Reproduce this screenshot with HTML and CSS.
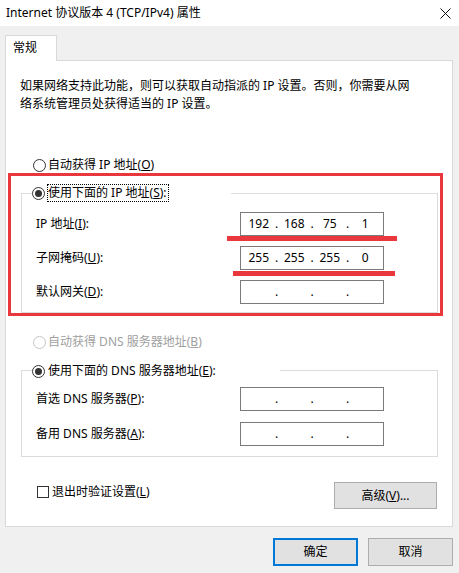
FILE: index.html
```html
<!DOCTYPE html>
<html lang="zh-CN">
<head>
<meta charset="utf-8">
<link rel="stylesheet" href="styles.css">
<title>Internet 协议版本 4 (TCP/IPv4) 属性</title>
</head>
<body>
<div id="dialog">
<div id="titlebar">
<span class="title">Internet 协议版本 4 (TCP/IPv4) 属性</span>
<span class="close"><svg width="11" height="11" viewBox="0 0 11 11"><path d="M0.5 0.5L10.5 10.5M10.5 0.5L0.5 10.5" stroke="#111" stroke-width="1"/></svg></span>
</div>
<div id="tabs"><div class="tab">常规</div></div>
<div id="panel">
<p class="intro">如果网络支持此功能，则可以获取自动指派的 IP 设置。否则，你需要从网<br>络系统管理员处获得适当的 IP 设置。</p>
<div class="opt"><span class="radio"></span>自动获得 IP 地址(<u>O</u>)</div>
<div class="mark">
<div class="group ip">
<div class="legend"><span class="radio on"></span><span class="focus">使用下面的 IP 地址(<u>S</u>):</span></div>
<div class="rows">
  <div class="label">IP 地址(<u>I</u>):</div>
  <div class="ipbox line-a"><span class="oct">192</span><span class="dot">.</span><span class="oct">168</span><span class="dot">.</span><span class="oct">75</span><span class="dot">.</span><span class="oct">1</span></div>
  <div class="label">子网掩码(<u>U</u>):</div>
  <div class="ipbox line-b"><span class="oct">255</span><span class="dot">.</span><span class="oct">255</span><span class="dot">.</span><span class="oct">255</span><span class="dot">.</span><span class="oct">0</span></div>
  <div class="label">默认网关(<u>D</u>):</div>
  <div class="ipbox"><span class="oct"></span><span class="dot">.</span><span class="oct"></span><span class="dot">.</span><span class="oct"></span><span class="dot">.</span><span class="oct"></span></div>
</div>
</div>
</div>
<div class="opt disabled"><span class="radio"></span>自动获得 DNS 服务器地址(<u>B</u>)</div>
<div class="group dns">
<div class="legend"><span class="radio on"></span><span class="text">使用下面的 DNS 服务器地址(<u>E</u>):</span></div>
<div class="rows">
  <div class="label">首选 DNS 服务器(<u>P</u>):</div>
  <div class="ipbox"><span class="oct"></span><span class="dot">.</span><span class="oct"></span><span class="dot">.</span><span class="oct"></span><span class="dot">.</span><span class="oct"></span></div>
  <div class="label">备用 DNS 服务器(<u>A</u>):</div>
  <div class="ipbox"><span class="oct"></span><span class="dot">.</span><span class="oct"></span><span class="dot">.</span><span class="oct"></span><span class="dot">.</span><span class="oct"></span></div>
</div>
</div>
<div class="footer">
  <div class="check"><span class="box"></span>退出时验证设置(<u>L</u>)</div>
  <button class="btn adv">高级(<u>V</u>)...</button>
</div>
</div>
<div id="actions">
  <button class="btn ok">确定</button>
  <button class="btn">取消</button>
</div>
</div>
</body>
</html>
```

FILE: styles.css
```css
body {
  margin: 0;
  background: #f0f0f0;
  font-family: "Noto Sans", "Noto Sans CJK SC", sans-serif;
  font-size: 12px;
  line-height: 18px;
  color: #000;
}
u { text-underline-offset: 1px; }
#dialog { width: 459px; height: 573px; }

#titlebar {
  height: 26px;
  background: #fff;
  display: flex;
  align-items: center;
  padding-left: 6px;
}
#titlebar .close { margin-left: auto; margin-right: 8px; display: flex; }

#tabs { display: flex; margin: 9px 0 0 5px; }
.tab {
  width: 52px;
  height: 26px;
  box-sizing: border-box;
  border: 1px solid #d9d9d9;
  border-bottom: none;
  background: #fff;
  padding-left: 7px;
  line-height: 24px;
  margin-bottom: -1px;
  position: relative;
  z-index: 1;
}

#panel {
  margin-left: 5px;
  width: 448px;
  height: 467px;
  box-sizing: border-box;
  border: 1px solid #d9d9d9;
  background: #fff;
  padding: 0 14px 0 15px;
}
.intro { margin: 16px 0 0 -1px; }

.opt {
  display: flex;
  align-items: center;
  height: 18px;
  margin-top: 43px;
  padding-left: 12px;
}
.opt.disabled { margin-top: 17px; color: #a0a0a0; }
.opt.disabled .radio { border-color: #c4c4c4; }

.radio {
  width: 13px;
  height: 13px;
  box-sizing: border-box;
  border: 1px solid #333;
  border-radius: 50%;
  margin-right: 2px;
  display: flex;
  align-items: center;
  justify-content: center;
  background: #fff;
}
.radio.on::before {
  content: "";
  width: 7px;
  height: 7px;
  border-radius: 50%;
  background: #333;
}

.mark {
  margin: -1px -5px 0 -13px;
  border: 3px solid #e8383d;
  padding: 17px 2px 0 10px;
}

.group { border: 1px solid #dcdcdc; padding-bottom: 8px; }
.group.dns { margin-top: 19px; padding-bottom: 10px; }
.legend {
  display: flex;
  align-items: center;
  height: 18px;
  margin: -10px 0 0 10px;
  width: 199px;
  background: #fff;
}
.dns .legend { margin-top: -9px; width: 248px; }
.focus { border: 1px dotted #000; line-height: 16px; padding-right: 1px; }
.dns .legend .text { margin-left: 1px; }

.rows {
  display: grid;
  grid-template-columns: 204px 144px;
  grid-auto-rows: 24px;
  row-gap: 10px;
  align-items: center;
  margin: 10px 0 0 14px;
}
.dns .rows { margin-top: 7px; row-gap: 11px; }

.ipbox {
  height: 24px;
  box-sizing: border-box;
  border: 1px solid #7a7a7a;
  background: #fff;
  display: flex;
  padding: 0 2px;
  line-height: 22px;
  position: relative;
}
.ipbox .oct { flex: 1; text-align: center; }
.ipbox .dot { width: 4px; text-align: center; }
.line-a::after, .line-b::after {
  content: "";
  position: absolute;
  height: 5px;
  background: #e8383d;
  z-index: 2;
}
.line-a::after { left: -14px; top: 23px; width: 170px; }
.line-b::after { left: -8px; top: 24px; width: 162px; }

.footer {
  display: flex;
  justify-content: space-between;
  align-items: flex-start;
  margin-top: 25px;
}
.check {
  display: flex;
  align-items: center;
  margin-top: 1px;
  padding-left: 16px;
}
.check .box {
  width: 12px;
  height: 12px;
  box-sizing: border-box;
  border: 1px solid #333;
  margin-right: 3px;
}

.btn {
  font: inherit;
  line-height: 18px;
  color: #000;
  background: #e1e1e1;
  border: 1px solid #adadad;
  padding: 0;
  width: 85px;
  height: 28px;
  box-sizing: border-box;
}
.btn.adv { width: 103px; height: 27px; margin-right: 1px; }
.btn.ok { border: 2px solid #0078d7; }

#actions {
  display: flex;
  justify-content: flex-end;
  gap: 10px;
  margin-top: 11px;
  padding-right: 6px;
}
```
